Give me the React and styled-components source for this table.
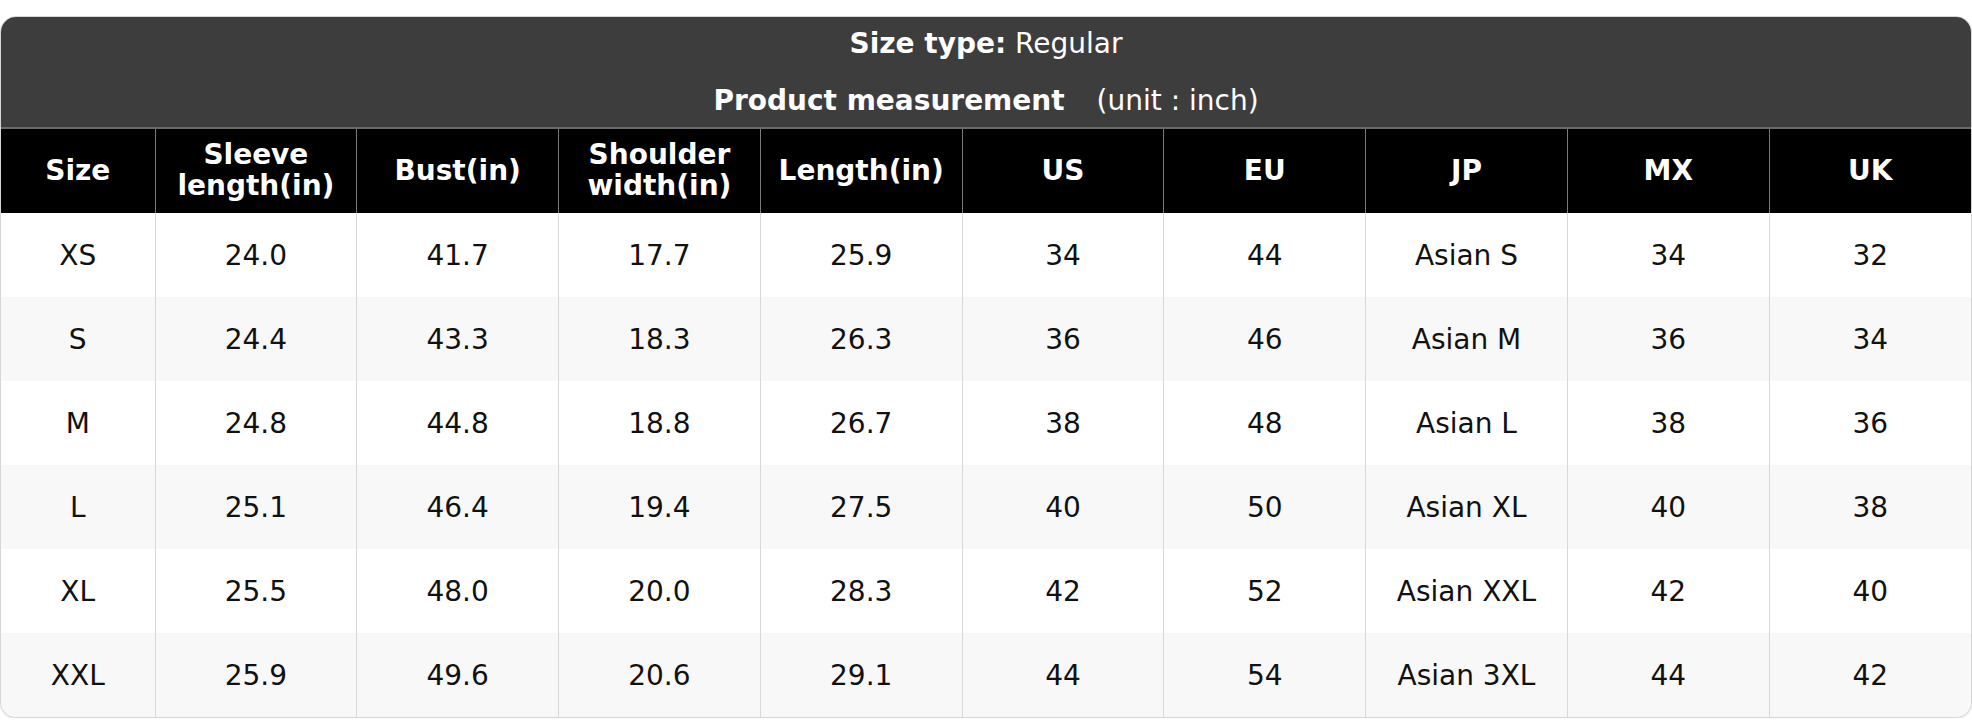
import React from "react";
import styled, { createGlobalStyle } from "styled-components";

const Global = createGlobalStyle`
	html, body {
		margin: 0;
		padding: 0;
		background: #fff;
		font-family: "DejaVu Sans", Verdana, sans-serif;
	}
`;

const Page = styled.div`
	padding-top: 16px;
`;

const Card = styled.div`
	border: 1px solid #d6d6d6;
	border-radius: 16px;
	overflow: hidden;
	box-shadow: 0 1px 2px rgba(0,0,0,.12);
	background: #fff;
`;

const Banner = styled.div`
	background: #3d3d3d;
	color: #fff;
	display: flex;
	flex-direction: column;
	align-items: center;
	border-bottom: 2px solid #6a6a6a;
`;

const BannerLine = styled.div`
	height: ${props => props.h}px;
	line-height: ${props => props.h}px;
	margin-top: ${props => props.top || 0}px;
	font-size: 28px;
	display: flex;
	gap: ${props => props.gap || 0}px;

	b {
		font-weight: bold;
	}
`;

const Table = styled.table`
	width: 100%;
	border-collapse: collapse;
	table-layout: fixed;
`;

const HeadCell = styled.th`
	background: #000;
	color: #fff;
	font-size: 28px;
	font-weight: bold;
	line-height: 1.1;
	height: 84px;
	padding: 0 10px;
	text-align: center;
	border-left: 1px solid #7a7a7a;

	&:first-child {
		border-left: none;
	}
`;

const Row = styled.tr`
	background: ${props => props.shade ? "#f8f8f8" : "#fff"};
`;

const Cell = styled.td`
	font-size: 28px;
	color: #111;
	height: 84px;
	padding: 0 8px;
	text-align: center;
	border-left: 1px solid #d8d8d8;

	&:first-child {
		border-left: none;
	}
`;

const columns = [
	"Size",
	"Sleeve length(in)",
	"Bust(in)",
	"Shoulder width(in)",
	"Length(in)",
	"US",
	"EU",
	"JP",
	"MX",
	"UK",
];

const rows = [
	["XS", "24.0", "41.7", "17.7", "25.9", "34", "44", "Asian S", "34", "32"],
	["S", "24.4", "43.3", "18.3", "26.3", "36", "46", "Asian M", "36", "34"],
	["M", "24.8", "44.8", "18.8", "26.7", "38", "48", "Asian L", "38", "36"],
	["L", "25.1", "46.4", "19.4", "27.5", "40", "50", "Asian XL", "40", "38"],
	["XL", "25.5", "48.0", "20.0", "28.3", "42", "52", "Asian XXL", "42", "40"],
	["XXL", "25.9", "49.6", "20.6", "29.1", "44", "54", "Asian 3XL", "44", "42"],
];

const App = () => {
	return (
		<Page>
			<Global />
			<Card>
				<Banner>
					<BannerLine h={54}>
						<span><b>Size type:</b> Regular</span>
					</BannerLine>
					<BannerLine h={53} top={3} gap={32}>
						<b>Product measurement</b>
						<span>(unit : inch)</span>
					</BannerLine>
				</Banner>
				<Table>
					<colgroup>
						<col style={{ width: 154 }} />
						{columns.slice(1).map(c => <col key={c} />)}
					</colgroup>
					<thead>
						<tr>
							{columns.map(c => <HeadCell key={c}>{c}</HeadCell>)}
						</tr>
					</thead>
					<tbody>
						{rows.map((r, i) => (
							<Row key={r[0]} shade={i % 2 === 1}>
								{r.map((v, j) => <Cell key={j}>{v}</Cell>)}
							</Row>
						))}
					</tbody>
				</Table>
			</Card>
		</Page>
	);
};

export default App;
